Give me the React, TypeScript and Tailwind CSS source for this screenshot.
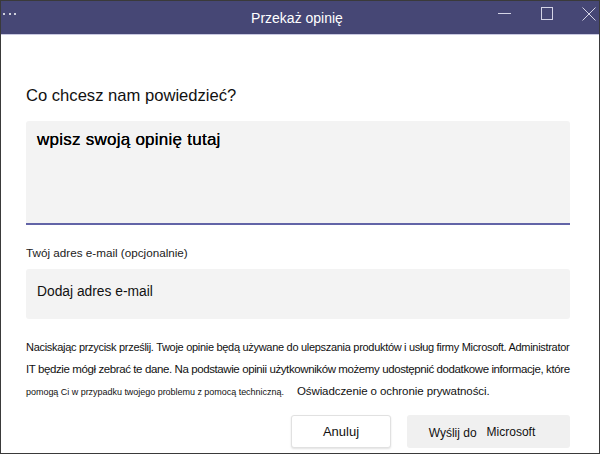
import React from "react";

function TitleBar() {
  return (
    <div className="relative flex h-[34px] shrink-0 items-center justify-center border-b border-[#c8c8e0] bg-[#464775]">
      {/* kropki menu */}
      <div className="absolute left-[2px] top-[12px] flex gap-[3.5px]">
        <span className="h-[2px] w-[2px] rounded-full bg-white" />
        <span className="h-[2px] w-[2px] rounded-full bg-white" />
        <span className="h-[2px] w-[2px] rounded-full bg-white" />
      </div>

      <span className="-ml-[6px] text-[14px] leading-[20px] text-white">Przekaż opinię</span>

      {/* przyciski okna */}
      <div className="absolute right-0 top-0 flex h-[33px]">
        <svg width="14" height="33" viewBox="0 0 14 33" className="mr-[29px]">
          <line x1="0" y1="12.5" x2="13" y2="12.5" stroke="#d4d4e6" strokeWidth="1" />
        </svg>
        <svg width="13" height="33" viewBox="0 0 13 33" className="mr-[28px]">
          <rect x="0.5" y="6.5" width="11" height="12" fill="none" stroke="#d4d4e6" strokeWidth="1" />
        </svg>
        <svg width="14" height="33" viewBox="0 0 14 33" className="mr-[3px]">
          <path d="M0.5 6.5 L13.5 19.5 M13.5 6.5 L0.5 19.5" stroke="#d4d4e6" strokeWidth="1" />
        </svg>
      </div>
    </div>
  );
}

export default function App() {
  return (
    <div className="flex h-[454px] w-[600px] flex-col border border-[#3a3a3a] bg-white font-['Liberation_Sans',Arial,sans-serif] text-black">
      <TitleBar />

      <div className="flex flex-col pl-[25px] pr-[29px]">
        <p className="mt-[51px] text-[16.6px] leading-[20px] text-[#111]">Co chcesz nam powiedzieć?</p>

        {/* pole opinii */}
        <div className="mt-[15px] h-[104px] rounded-t-[3px] border-b-2 border-[#6264a7] bg-[#f3f3f3] pl-[11px] pt-[7px]">
          <span className="text-[17px] leading-[20px] tracking-[0.25px] text-black [text-shadow:0_0_0.2px_#000]">
            wpisz swoją opinię tutaj
          </span>
        </div>

        <label className="mt-[20px] text-[11.7px] leading-[16px] text-[#222]">Twój adres e-mail (opcjonalnie)</label>

        <div className="mt-[8px] h-[50px] rounded-[3px] bg-[#f3f3f3] pl-[11px] pt-[10px]">
          <span className="text-[13.8px] leading-[20px] text-[#111]">Dodaj adres e-mail</span>
        </div>

        {/* informacja o danych */}
        <div className="mt-[17px] text-[#111]">
          <span className="block whitespace-nowrap text-[11px] leading-[22px] tracking-[-0.3px]">
            Naciskając przycisk prześlij. Twoje opinie będą używane do ulepszania produktów i usług firmy Microsoft. Administrator
          </span>
          <span className="block whitespace-nowrap text-[11.5px] leading-[22px] tracking-[-0.4px]">
            IT będzie mógł zebrać te dane. Na podstawie opinii użytkowników możemy udostępnić dodatkowe informacje, które
          </span>
          <span className="flex items-baseline whitespace-nowrap leading-[22px]">
            <span className="text-[9px] tracking-[-0.03px]">pomogą Ci w przypadku twojego problemu z pomocą techniczną.</span>
            <span className="ml-[13px] text-[11.5px] tracking-[-0.08px]">Oświadczenie o ochronie prywatności.</span>
          </span>
        </div>

        {/* przyciski */}
        <div className="mt-[12px] flex justify-end gap-[16px]">
          <button className="h-[33px] w-[100px] rounded-[3px] border border-[#e1e1e1] bg-white text-[13px] text-[#111] shadow-[0_1px_2px_rgba(0,0,0,0.12)]">
            Anuluj
          </button>
          <button className="flex h-[33px] w-[163px] items-center justify-center rounded-[3px] bg-[#f0f0f0] pr-[13px] text-[12px] text-[#111]">
            <span className="mt-[3px]">Wyślij do</span>
            <span className="ml-[10px]">Microsoft</span>
          </button>
        </div>
      </div>
    </div>
  );
}
